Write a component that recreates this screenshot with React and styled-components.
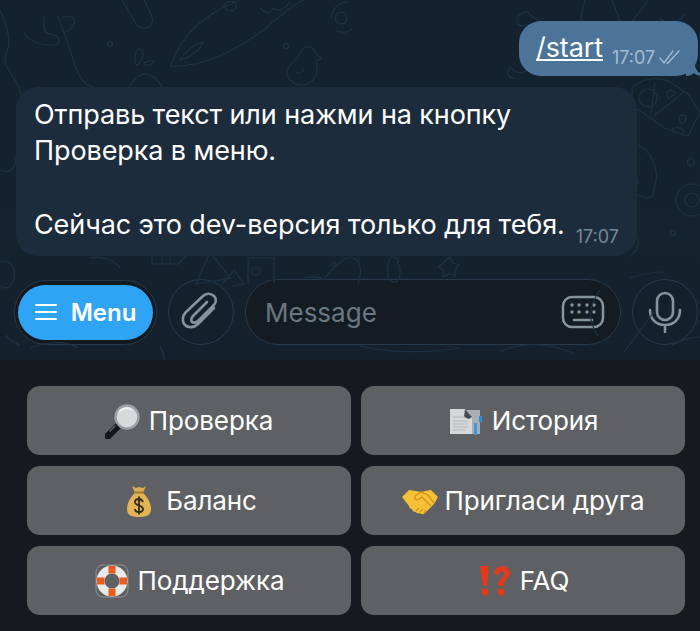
import React from 'react';
import styled, { createGlobalStyle } from 'styled-components';

const Global = createGlobalStyle`
  html, body { margin: 0; padding: 0; background: #16191f; }
  body { font-family: Inter, "Liberation Sans", sans-serif; }
`;

const Page = styled.div`
  width: 700px;
  height: 631px;
  overflow: hidden;
  display: flex;
  flex-direction: column;
`;

const Chat = styled.section`
  position: relative;
  height: 360px;
  box-sizing: border-box;
  padding: 21px 2px 0 16px;
  display: flex;
  flex-direction: column;
  background: linear-gradient(180deg, #14212e 0%, #15232f 70%, #14202b 100%);
`;

const Doodles = styled.svg`
  position: absolute;
  inset: 0;
  width: 700px;
  height: 360px;
  fill: none;
  stroke: #1f3243;
  stroke-width: 1.2;
`;

const Outgoing = styled.div`
  position: relative;
  align-self: flex-end;
  width: 179px;
  height: 55px;
  box-sizing: border-box;
  padding: 11px 0 0 17px;
  display: flex;
  border-radius: 22px;
  background: #4c7499;
  color: #fff;
`;

const Tail = styled.svg`
  position: absolute;
  right: -6px;
  bottom: 0;
  width: 18px;
  height: 12px;
  fill: #4c7499;
`;

const Command = styled.span`
  font-size: 27px;
  line-height: 32px;
  letter-spacing: -0.1px;
  text-decoration: underline;
  text-decoration-thickness: 1.5px;
  text-underline-offset: 2px;
`;

const OutTime = styled.span`
  margin: 16px 0 0 9px;
  font-size: 18px;
  line-height: 20px;
  color: #a5bdd2;
`;

const Checks = styled.svg`
  width: 24px;
  height: 14px;
  margin: 18px 0 0 4px;
  fill: none;
  stroke: #a5bdd2;
  stroke-width: 1.3;
  stroke-linecap: round;
`;

const Incoming = styled.div`
  position: relative;
  margin-top: 11px;
  width: 621px;
  height: 169px;
  box-sizing: border-box;
  padding: 10px 0 0 18px;
  border-radius: 22px;
  background: #1d2c3c;
  color: #fff;
`;

const MessageLine = styled.div`
  font-size: 27px;
  line-height: 36px;
  height: ${(p) => (p.$tall ? 37 : 36)}px;
  letter-spacing: -0.1px;
  white-space: nowrap;
`;

const InTime = styled.span`
  position: absolute;
  right: 18px;
  bottom: 9px;
  font-size: 18px;
  line-height: 20px;
  color: #74889a;
`;

const InputBar = styled.div`
  margin: 23px 0 0 -2px;
  display: flex;
  align-items: center;
  gap: 11px;
`;

const MenuRing = styled.div`
  width: 143px;
  height: 65px;
  box-sizing: border-box;
  padding: 4px 3px;
  border: 1px solid #263a4c;
  border-radius: 33px;
  background: #12191f;
`;

const MenuButton = styled.div`
  height: 100%;
  display: flex;
  align-items: center;
  justify-content: center;
  gap: 14px;
  border-radius: 28px;
  background: #2fa4f5;
  color: #fff;
  font-size: 24px;
  font-weight: 600;
`;

const RoundButton = styled.div`
  width: 66px;
  height: 66px;
  flex: none;
  box-sizing: border-box;
  display: flex;
  align-items: center;
  justify-content: center;
  border: 1px solid #263a4c;
  border-radius: 50%;
  background: ${(p) => (p.$dark ? '#141b22' : '#14212d')};
`;

const MessageInput = styled.div`
  width: 376px;
  height: 66px;
  box-sizing: border-box;
  padding: 0 15px 0 19px;
  display: flex;
  align-items: center;
  justify-content: space-between;
  border: 1px solid #263a4c;
  border-radius: 33px;
  background: #141b22;
  color: #6b7780;
  font-size: 26px;
`;

const BarIcon = styled.svg`
  display: block;
  fill: none;
  stroke: #87939b;
  stroke-width: 2.6;
  stroke-linecap: round;
  stroke-linejoin: round;
`;

const MenuBars = styled(BarIcon)`
  stroke: #fff;
  stroke-width: 2;
`;

const Keyboard = styled.section`
  flex: 1;
  box-sizing: border-box;
  padding: 26px 15px 0 27px;
  display: grid;
  grid-template-columns: 324px 324px;
  grid-auto-rows: 69px;
  column-gap: 10px;
  row-gap: 11px;
  background: #16191f;
`;

const KeyButton = styled.div`
  display: flex;
  align-items: center;
  justify-content: center;
  gap: ${(p) => p.$gap || 10}px;
  border-radius: 13px;
  background: #5e6063;
  color: #fff;
  font-size: 26px;
  letter-spacing: -0.1px;
  white-space: nowrap;
`;

const Emoji = styled.svg`
  width: 36px;
  height: 36px;
  flex: none;
  display: block;
`;

const DoodleArt = () => (
  <Doodles viewBox="0 0 700 360">
    <path d="M0 10c8 20 12 30 6 45s18 25 16 50" />
    <path d="M24 33c6 9 18 12 28 12s8-8 2-10c-6-1-10-2-10-8s0-9 0-10" />
    <path d="M58 16c12 32 18 58 26 66s26 6 26 20" />
    <path d="M62 18c8-4 14 0 12 6s-8 8-10 8" />
    <path d="M122 0l13 22c3 6 11 8 15 4s3-8 1-12L144 0" />
    <circle cx="110" cy="44" r="2.500" />
    <path d="M137 50c-3 8-3 14 0 15 3-1 7-8 6-13-1-3-4-4-6-2z" />
    <path d="M144 63c5-2 8-3 10-2-1 3-5 5-9 4z" />
    <path d="M130 88c2-10 14-18 22-12 4 3 10 7 10 14" />
    <path d="M170 66C182 36 200 16 240 0M170 66c34 2 70-18 96-38 12-10 30-26 38-28" />
    <path d="M180 60c6-9 14-16 23-18-3 8-13 16-23 18z" />
    <path d="M225 4c5-5 14-3 11 3s-12 5-11-3z" />
    <path d="M260 8c6 6 10 6 14 0 4 4 10 2 16-6" />
    <circle cx="286" cy="46" r="2.500" />
    <path d="M300 54c0-8 12-10 15-2 2 3 6 5 6 7-2 0-4 1-5 3 4 12-2 22-14 23-10 0-16-8-15-14 1-6 8-9 13-17z" />
    <path d="M296 72c3 3 5 2 8-3" />
    <path d="M331 20c0-10 8-18 16-18M335 30c8 4 15 2 17-2" />
    <circle cx="341" cy="18" r="6" />
    <path d="M521 14c5-4 8-2 10 2l14 8c4-2 8 0 8 4s-4 4-6 3c0 4-4 6-8 3l-14-9c-4 2-9 0-8-5-1-2 1-5 4-6z" />
    <path d="M585 0c-8 22-4 46 14 60M612 0c6 14 12 30 8 50" />
    <path d="M648 0c-8 14-20 22-30 44M660 18c10 10 18 6 24-4" />
    <path d="M510 66c6 10 18 8 20-2M516 78c-8 2-10-6-6-10" />
    <path d="M632 88c10-10 26-12 38-6l18 12 12 18-12 24-24-8-16-12-16-10z" />
    <path d="M655 82l-4 32M654 116l30-24" />
    <circle cx="648" cy="98" r="9" />
    <path d="M667 92c3-3 7-2 7 1s-4 5-6 5z" />
    <path d="M679 117c3-3 8-2 7 2s-4 5-6 3zM672 130c4-4 10-3 12 2" />
    <path d="M638 145c14 6 20 26 18 36l-4 16c-6 2-14 0-18-6l4-8-4-22" />
    <circle cx="691" cy="162" r="3.500" />
    <circle cx="692" cy="200" r="16" />
    <circle cx="692" cy="200" r="7" />
    <circle cx="673" cy="233" r="2.500" />
    <path d="M638 238c1 8-2 14-8 18M630 278c12-4 24-6 34-6" />
    <path d="M150 264h28l8-8M152 256v8M162 256v8M170 256v8" />
    <path d="M196 284l14-32 20 26zM222 284l12-14 10 14-12 2" />
    <path d="M246 258h28v26M248 258v26" />
    <circle cx="256" cy="271" r="4" />
    <path d="M304 278c10-2 16-2 20 2 8-12 22-26 30-22 10 6 6 20 4 26" />
    <circle cx="334" cy="264" r="2" />
    <path d="M390 258c5-2 9 0 8 6 3 4 3 12-1 18-4 0-6 0-8-2-2-6-2-14 1-22z" />
    <path d="M444 262l6-5 3 6 6 2-4 4v7l-6-2-6 3 1-7-5-3z" />
    <path d="M0 262c10-4 16 6 14 16s-8 12-14 8M90 258c12-2 24 2 30 10" />
    <path d="M360 346c22 6 60 8 100 2M500 352c20-10 50-10 74 2M600 290c-10 14-14 28-2 46" />
    <path d="M624 352l30-40M20 345c-10-4-12-6-14-10M160 346c4 8 4 10 4 14M30 348c14-6 36-8 48 0" />
    <path d="M0 170c12 4 18-4 14-14M672 345c10-6 22-8 28-8" />
  </Doodles>
);

const MagnifierIcon = () => (
  <Emoji viewBox="0 0 36 36">
    <path d="M3 33l11-11" stroke="#14171a" strokeWidth="7" strokeLinecap="round" />
    <path d="M5 28l5-5" stroke="#59616a" strokeWidth="1.500" strokeLinecap="round" />
    <circle cx="22" cy="14" r="11.500" fill="#d7d9db" stroke="#9aa0a5" strokeWidth="2.400" />
    <path d="M14 9c3-4 9-5 13-2" fill="none" stroke="#eef0f1" strokeWidth="1.600" />
  </Emoji>
);

const DocumentsIcon = () => (
  <Emoji viewBox="0 0 36 36">
    <rect x="15" y="7" width="17" height="24" fill="#a9aeb2" />
    <path d="M2 6h15l7 8v17H2z" fill="#d5d7d9" />
    <path d="M17 6l7 8-3 2-5-2z" fill="#4a4c50" />
    <path d="M5 14h12M5 18h15M5 21h15M5 24h15M5 27h12" stroke="#b4b7bb" strokeWidth="1" />
    <rect x="31" y="13" width="3" height="6" fill="#2d8fe0" />
    <rect x="26" y="20" width="3" height="12" fill="#3d98e4" />
  </Emoji>
);

const MoneyBagIcon = () => (
  <Emoji viewBox="0 0 36 36">
    <path d="M11 3l4 2 3-1 4 1 3-2-3 7h-8z" fill="#d9ac55" />
    <path d="M14 10c-5 4-8 11-8 16 0 6 4 8 12 8s12-2 12-8c0-5-3-12-8-16z" fill="#e3b455" />
    <path d="M13 9.500h10" stroke="#a87a2c" strokeWidth="2" />
    <path d="M22 19c-1-2-2-3-4-3-3 0-4 1.500-4 3 0 4.500 8 2.500 8 7 0 2-2 3-4 3s-4-1-4-3M18 13.500v18" fill="none" stroke="#33291c" strokeWidth="1.800" />
  </Emoji>
);

const HandshakeIcon = () => (
  <Emoji viewBox="0 0 36 36">
    <path d="M0 14l7-7 7 1 5 1 4-1 6-1 7 7-4 7-9 9c-2 2-5 1-5 0-2 1-4 0-4-1-2 0-4-1-4-3-2 0-3-2-3-3z" fill="#f6c136" />
    <path d="M13 13l6-4 7 3 6 8M13 13c-1 3 2 5 4 3l3-2 9 9M14 28l3-3M18 29l3-3M22 30l2-3" fill="none" stroke="#d4921c" strokeWidth="1.300" />
  </Emoji>
);

const LifebuoyIcon = () => (
  <Emoji viewBox="0 0 36 36">
    <rect x="2" y="2" width="32" height="32" rx="7" fill="none" stroke="#8d8f92" strokeWidth="1" />
    <circle cx="18" cy="18" r="11.500" fill="none" stroke="#e9e9ea" strokeWidth="8" />
    <path d="M18 3v7.500M18 25.500V33M3 18h7.500M25.500 18H33" stroke="#ea5b1f" strokeWidth="7" />
  </Emoji>
);

const BangQuestionIcon = () => (
  <Emoji viewBox="0 0 36 36">
    <path d="M3 3h9l-2 20H6z" fill="#e5391b" />
    <circle cx="8" cy="29" r="3.500" fill="#e5391b" />
    <path d="M17 11c0-5 4-8 8-8s8 3 8 7c0 6-7 6-6 13h-6c-1-7 6-8 6-12 0-2-1-3-2-3s-3 1-3 4z" fill="#e5391b" />
    <circle cx="24" cy="29" r="3.500" fill="#e5391b" />
  </Emoji>
);

const rows = [
  { label: 'Проверка', icon: <MagnifierIcon />, gap: 8 },
  { label: 'История', icon: <DocumentsIcon />, gap: 8 },
  { label: 'Баланс', icon: <MoneyBagIcon />, gap: 9 },
  { label: 'Пригласи друга', icon: <HandshakeIcon />, gap: 7 },
  { label: 'Поддержка', icon: <LifebuoyIcon />, gap: 8 },
  { label: 'FAQ', icon: <BangQuestionIcon />, gap: 7 },
];

export default function App() {
  return (
    <Page>
      <Global />
      <Chat>
        <DoodleArt />
        <Outgoing>
          <Command>/start</Command>
          <OutTime>17:07</OutTime>
          <Checks viewBox="0 0 24 14">
            <path d="M1 8l4 5 9-12M8 13l1 0 11-12" />
          </Checks>
          <Tail viewBox="0 0 18 12">
            <path d="M0 12V0h9c0 5 3 9 9 12-5 0-8-1-10-3-2 2-5 3-8 3z" />
          </Tail>
        </Outgoing>
        <Incoming>
          <MessageLine>Отправь текст или нажми на кнопку</MessageLine>
          <MessageLine $tall>Проверка в меню.</MessageLine>
          <MessageLine $tall />
          <MessageLine>Сейчас это dev-версия только для тебя.</MessageLine>
          <InTime>17:07</InTime>
        </Incoming>
        <InputBar>
          <MenuRing>
            <MenuButton>
              <MenuBars width="22" height="18" viewBox="0 0 22 18">
                <path d="M1 2h20M1 9h20M1 16h20" />
              </MenuBars>
              Menu
            </MenuButton>
          </MenuRing>
          <RoundButton>
            <BarIcon width="40" height="42" viewBox="0 0 40 42">
              <path d="M33 17L17 33c-4 4-10 4-13 1s-3-9 1-13L22 5c3-3 8-3 11 0s2 7-1 10L17 30c-2 2-5 2-6 1s-1-4 1-6L26 11" />
            </BarIcon>
          </RoundButton>
          <MessageInput>
            Message
            <BarIcon width="44" height="34" viewBox="0 0 44 34">
              <rect x="2" y="2" width="40" height="30" rx="9" />
              <path d="M13 25h18" />
              <path d="M11 10h0M18 10h0M26 10h0M33 10h0M11 17h0M18 17h0M26 17h0M33 17h0" strokeWidth="3.400" />
            </BarIcon>
          </MessageInput>
          <RoundButton>
            <BarIcon width="34" height="42" viewBox="0 0 34 42">
              <rect x="9" y="2" width="16" height="27" rx="8" />
              <path d="M2 19c0 9 6 15 15 15s15-6 15-15M17 34v7" />
            </BarIcon>
          </RoundButton>
        </InputBar>
      </Chat>
      <Keyboard>
        {rows.map((row) => (
          <KeyButton key={row.label} $gap={row.gap}>
            {row.icon}
            {row.label}
          </KeyButton>
        ))}
      </Keyboard>
    </Page>
  );
}
